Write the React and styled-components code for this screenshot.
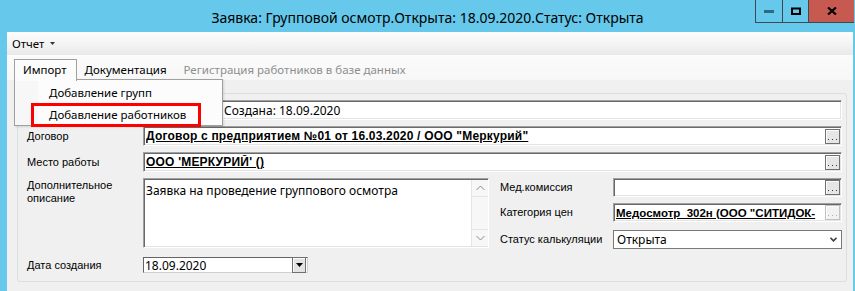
import React from 'react';
import styled, { createGlobalStyle } from 'styled-components';

const Global = createGlobalStyle`
	html, body {
		margin: 0;
		padding: 0;
		background: #66c8eb;
	}
	* {
		box-sizing: border-box;
	}
`;

const UI = `"Noto Sans", "Open Sans", sans-serif`;
const CLASSIC = `"Liberation Sans", Arial, sans-serif`;

const Window = styled.div`
	width: 855px;
	height: 291px;
	background: #66c8eb;
	display: flex;
	flex-direction: column;
	overflow: hidden;
`;

const TitleBar = styled.div`
	height: 32px;
	flex-shrink: 0;
	display: grid;
	grid-template-columns: 1fr auto 1fr;
	align-items: center;
`;

const Title = styled.div`
	grid-column: 2;
	font-family: ${UI};
	font-size: 14px;
	color: #000;
	padding-top: 2px;
	white-space: nowrap;
`;

const Controls = styled.div`
	grid-column: 3;
	justify-self: end;
	align-self: start;
	display: flex;
	margin-right: 1px;
	border-left: 1px solid #3c4b52;
	border-bottom: 1px solid #3c4b52;
`;

const CtlButton = styled.div`
	width: ${(p) => p.w}px;
	height: 22px;
	display: flex;
	align-items: center;
	justify-content: center;
	background: ${(p) => (p.close ? '#c75a50' : 'transparent')};
	border-right: 1px solid #3c4b52;
	&:last-child {
		border-right: none;
	}
`;

const Client = styled.div`
	flex: 1;
	margin: 0 2px 0 7px;
	background: #f0f0f0;
	display: flex;
	flex-direction: column;
	min-height: 0;
`;

const MenuBar = styled.div`
	height: 23px;
	flex-shrink: 0;
	display: flex;
	align-items: center;
	padding-left: 5px;
	background: linear-gradient(#fdfdfd, #f3f3f3 55%, #e9e9e9);
	font-family: ${UI};
	font-size: 11.5px;
	color: #000;
`;

const MenuItem = styled.div`
	display: flex;
	align-items: center;
	gap: 6px;
`;

const ToolStrip = styled.div`
	position: relative;
	height: 25px;
	flex-shrink: 0;
	display: flex;
	align-items: flex-end;
	padding-left: 7px;
	background: linear-gradient(#fbfbfb, #f7f7f7);
	font-family: ${UI};
	font-size: 11.5px;
	z-index: 2;
`;

const ToolItem = styled.div`
	height: 21px;
	display: flex;
	align-items: center;
	padding: 0 ${(p) => p.pad || 8}px;
	color: ${(p) => (p.disabled ? '#8e8e8e' : '#000')};
	white-space: nowrap;
`;

const ActiveTab = styled(ToolItem)`
	position: relative;
	z-index: 3;
	height: 22px;
	margin-bottom: -1px;
	padding: 0 9px 2px 8px;
	background: #fcfcfc;
	border: 1px solid #a0a0a0;
	border-bottom: none;
`;

const Popup = styled.div`
	position: absolute;
	left: 7px;
	top: 24px;
	width: 209px;
	height: 47px;
	background: linear-gradient(90deg, #f7f7f7 0, #f7f7f7 23px, #fcfcfc 23px);
	border: 1px solid #a0a0a0;
	padding-top: 1px;
	box-shadow: 1px 1px 2px rgba(0, 0, 0, 0.12);
`;

const PopupItem = styled.div`
	height: 22px;
	display: flex;
	align-items: center;
	padding-left: 34px;
	color: #000;
	white-space: nowrap;
`;

const Highlight = styled.div`
	position: absolute;
	left: 16px;
	top: 23px;
	width: 170px;
	height: 24px;
	border: 3px solid #f00;
`;

const GroupBox = styled.div`
	flex: 1;
	margin: 13px 6px 9px 10px;
	border: 1px solid #d9dfe3;
	border-radius: 3px;
	padding: 6px 4px 0 9px;
	display: grid;
	grid-template-columns: 116px 346px 1fr;
	grid-template-rows: 20px 20px 20px 70px 19px;
	row-gap: 6px;
	align-content: start;
`;

const Label = styled.div`
	grid-column: 1;
	font-family: ${CLASSIC};
	font-size: 11px;
	color: #000;
	line-height: 13px;
	display: flex;
	align-items: ${(p) => (p.top ? 'flex-start' : 'center')};
	padding-top: ${(p) => (p.top ? 1 : 0)}px;
	margin-top: ${(p) => p.shift || 0}px;
	white-space: nowrap;
`;

const Sunken = styled.div`
	background: #fff;
	border-top: 1px solid #a0a0a0;
	border-left: 1px solid #a0a0a0;
	border-right: 1px solid #fff;
	border-bottom: 1px solid #fff;
	box-shadow: inset 1px 1px 0 #696969, inset -1px -1px 0 #e3e3e3;
	display: flex;
	align-items: center;
	min-width: 0;
`;

const Field = styled(Sunken)`
	grid-column: ${(p) => p.col || '2 / 4'};
	padding-left: 2px;
	padding-right: 1px;
`;

const FieldText = styled.div`
	flex: 1;
	min-width: 0;
	overflow: hidden;
	white-space: nowrap;
	font-family: ${(p) => (p.bold ? CLASSIC : UI)};
	font-size: ${(p) => (p.tight ? '11.5px' : '12px')};
	font-weight: ${(p) => (p.bold ? 700 : 400)};
	letter-spacing: ${(p) => (p.bold && !p.tight ? '0.2px' : '0')};
	text-decoration: ${(p) => (p.bold ? 'underline' : 'none')};
	padding-left: ${(p) => p.indent || 0}px;
	color: #000;
`;

const DotsButton = styled.div`
	width: 15px;
	height: 15px;
	flex-shrink: 0;
	border: 1px solid ${(p) => (p.disabled ? '#c2c2c2' : '#707070')};
	box-shadow: inset 1px 1px 0 #fcfcfc;
	background: ${(p) => (p.disabled ? '#f2f2f2' : '#e6e6e6')};
	display: flex;
	align-items: flex-end;
	justify-content: center;
	padding-bottom: 3px;
`;

const MemoBox = styled(Sunken)`
	grid-column: 2;
	align-items: stretch;
	padding-left: 2px;
`;

const MemoText = styled.div`
	flex: 1;
	padding-top: 3px;
	font-family: ${UI};
	font-size: 12px;
	color: #000;
`;

const ScrollBar = styled.div`
	width: 17px;
	margin: 1px 0;
	background: #f7f7f7;
	border-left: 1px solid #e4e4e4;
	display: flex;
	flex-direction: column;
	justify-content: space-between;
`;

const ScrollArrow = styled.div`
	height: 17px;
	display: flex;
	align-items: center;
	justify-content: center;
	border-top: ${(p) => (p.down ? '1px solid #e4e4e4' : 'none')};
	border-bottom: ${(p) => (p.down ? 'none' : '1px solid #e4e4e4')};
`;

const RightPanel = styled.div`
	grid-column: 3;
	margin-left: 11px;
	display: grid;
	grid-template-columns: 113px 1fr;
	grid-template-rows: 19px 19px 21px;
	row-gap: 6px;
`;

const SideLabel = styled(Label)`
	grid-column: 1;
`;

const SideField = styled(Field)`
	grid-column: 2;
`;

const Combo = styled.div`
	grid-column: 2;
	margin-top: 2px;
	background: #fff;
	border: 1px solid #7a7a7a;
	display: flex;
	align-items: center;
	padding: 0 4px 0 3px;
`;

const DateBox = styled.div`
	grid-column: 2;
	width: 165px;
	margin-top: 3px;
	background: #fff;
	border-top: 1px solid #646464;
	border-left: 1px solid #646464;
	border-right: 1px solid #d0d0d0;
	border-bottom: 1px solid #d0d0d0;
	display: flex;
	align-items: center;
	padding: 0 1px;
`;

const DateButton = styled.div`
	width: 14px;
	height: 16px;
	border: 1px solid #707070;
	background: #e3e3e3;
	box-shadow: inset 1px 1px 0 #fafafa;
	display: flex;
	align-items: center;
	justify-content: center;
`;

const Dots = ({ color }) => (
	<svg width="9" height="1" viewBox="0 0 9 1">
		<rect x="0" y="0" width="1" height="1" fill={color} />
		<rect x="4" y="0" width="1" height="1" fill={color} />
		<rect x="8" y="0" width="1" height="1" fill={color} />
	</svg>
);

const Dotted = ({ disabled }) => (
	<DotsButton disabled={disabled}>
		<Dots color={disabled ? '#b0b0b0' : '#3a3a3a'} />
	</DotsButton>
);

const Chevron = ({ up }) => (
	<svg width="9" height="6" viewBox="0 0 9 6">
		<path
			d={up ? 'M0.5 5L4.5 1L8.5 5' : 'M0.5 1L4.5 5L8.5 1'}
			fill="none"
			stroke="#8a8a8a"
			strokeWidth="1"
		/>
	</svg>
);

export default function App() {
	return (
		<Window>
			<Global />
			<TitleBar>
				<Title>Заявка: Групповой осмотр.Открыта: 18.09.2020.Статус: Открыта</Title>
				<Controls>
					<CtlButton w={27}>
						<svg width="10" height="3" viewBox="0 0 10 3">
							<rect width="10" height="3" fill="#2e6b80" />
						</svg>
					</CtlButton>
					<CtlButton w={26}>
						<svg width="10" height="8" viewBox="0 0 10 8">
							<path d="M1 1.5H9V7H1Z" fill="none" stroke="#000" strokeWidth="2" />
						</svg>
					</CtlButton>
					<CtlButton w={45} close>
						<svg width="10" height="8" viewBox="0 0 10 8">
							<path d="M1 0.5L9 7.5M9 0.5L1 7.5" stroke="#000" strokeWidth="2.2" />
						</svg>
					</CtlButton>
				</Controls>
			</TitleBar>
			<Client>
				<MenuBar>
					<MenuItem>
						Отчет
						<svg width="5" height="3" viewBox="0 0 5 3">
							<path d="M0 0H5L2.5 3Z" fill="#333" />
						</svg>
					</MenuItem>
				</MenuBar>
				<ToolStrip>
					<ActiveTab>Импорт</ActiveTab>
					<ToolItem>Документация</ToolItem>
					<ToolItem pad={9} disabled>
						Регистрация работников в базе данных
					</ToolItem>
					<Popup>
						<PopupItem>Добавление групп</PopupItem>
						<PopupItem>Добавление работников</PopupItem>
						<Highlight />
					</Popup>
				</ToolStrip>
				<GroupBox>
					<Field>
						<FieldText indent={78}>Создана: 18.09.2020</FieldText>
					</Field>

					<Label>Договор</Label>
					<Field>
						<FieldText bold>Договор с предприятием №01 от 16.03.2020 / ООО "Меркурий"</FieldText>
						<Dotted />
					</Field>

					<Label>Место работы</Label>
					<Field>
						<FieldText bold>ООО 'МЕРКУРИЙ' ()</FieldText>
						<Dotted />
					</Field>

					<Label top>
						Дополнительное
						<br />
						описание
					</Label>
					<MemoBox>
						<MemoText>Заявка на проведение группового осмотра</MemoText>
						<ScrollBar>
							<ScrollArrow>
								<Chevron up />
							</ScrollArrow>
							<ScrollArrow down>
								<Chevron />
							</ScrollArrow>
						</ScrollBar>
					</MemoBox>
					<RightPanel>
						<SideLabel>Мед.комиссия</SideLabel>
						<SideField>
							<FieldText />
							<Dotted />
						</SideField>
						<SideLabel>Категория цен</SideLabel>
						<SideField>
							<FieldText bold tight>Медосмотр&nbsp;&nbsp;302н (ООО "СИТИДОК-</FieldText>
							<Dotted disabled />
						</SideField>
						<SideLabel shift={2}>Статус калькуляции</SideLabel>
						<Combo>
							<FieldText>Открыта</FieldText>
							<svg width="7" height="5" viewBox="0 0 7 5">
								<path d="M0.5 0.8L3.5 3.8L6.5 0.8" fill="none" stroke="#444" strokeWidth="1.8" />
							</svg>
						</Combo>
					</RightPanel>

					<Label shift={3}>Дата создания</Label>
					<DateBox>
						<FieldText>18.09.2020</FieldText>
						<DateButton>
							<svg width="7" height="4" viewBox="0 0 7 4">
								<path d="M0 0H7L3.5 4Z" fill="#000" />
							</svg>
						</DateButton>
					</DateBox>
				</GroupBox>
			</Client>
		</Window>
	);
}
